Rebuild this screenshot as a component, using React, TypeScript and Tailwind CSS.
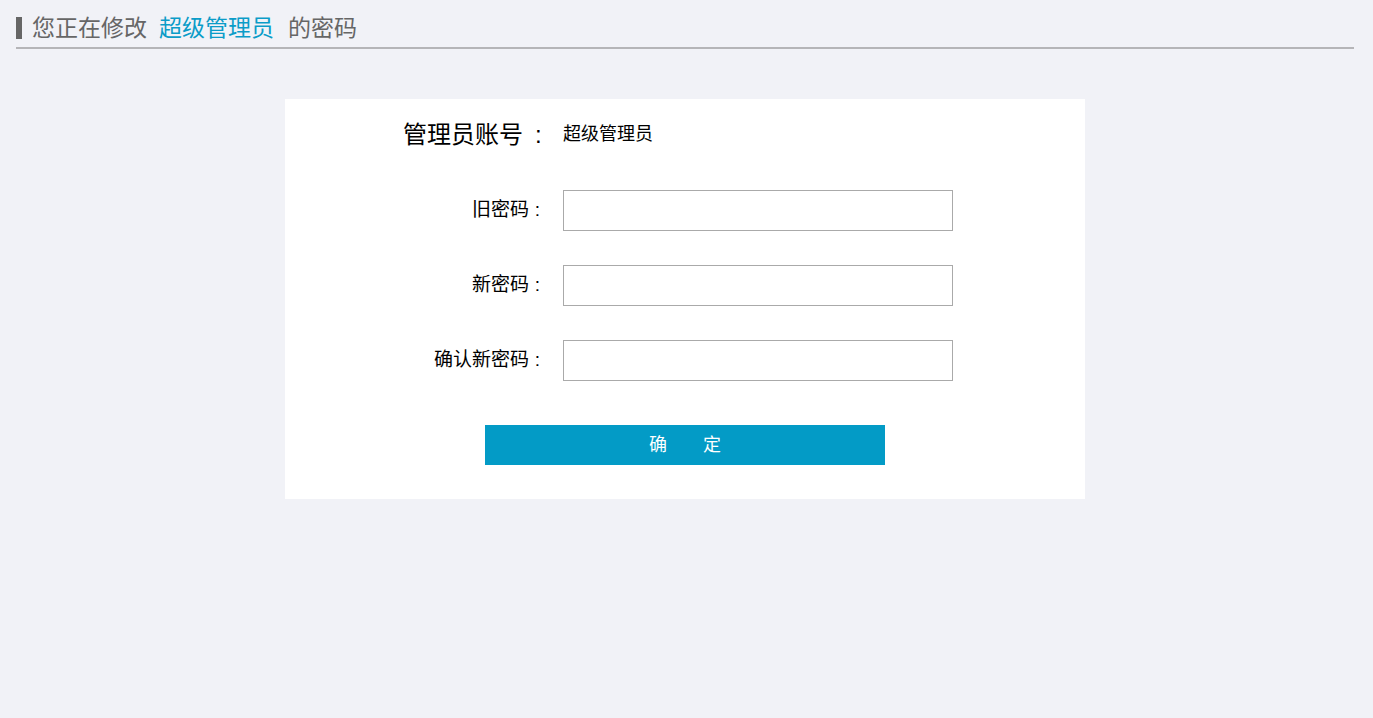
const fontStack = "font-['Liberation_Sans','Noto_Sans_CJK_SC',sans-serif]";

type Field = {
  id: string;
  label: string;
};

const fields: Field[] = [
  { id: "oldPassword", label: "旧密码" },
  { id: "newPassword", label: "新密码" },
  { id: "confirmPassword", label: "确认新密码" },
];

const App: React.FC = () => {
  return (
    <div className={`min-h-[718px] w-full bg-[#f1f2f7] ${fontStack}`}>
      <div className="ml-4 mr-[19px]">
        <div className="flex items-center border-b-2 border-[#b5b5b8] pb-[8px] pt-[17px]">
          <span className="h-[22px] w-[6px] bg-[#666666]" />
          <h1 className="ml-[10px] flex text-[23px] leading-[22px] text-[#666666]">
            <span>您正在修改</span>
            <span className="ml-[12px] mr-[14px] text-[#0b9cc8]">超级管理员</span>
            <span>的密码</span>
          </h1>
        </div>

        <div className="mx-auto mt-[50px] h-[400px] w-[800px] bg-white pt-[15px]">
          <div className="flex h-[41px] items-center">
            <div className="flex w-[261px] items-center justify-end text-[24px] text-black">
              <span>管理员账号</span>
              <span className="w-[23px] pl-[12px]">:</span>
            </div>
            <div className="ml-[17px] text-[18px] text-black">超级管理员</div>
          </div>

          <form className="mt-[35px] flex flex-col gap-[34px]">
            {fields.map((field) => (
              <div key={field.id} className="flex h-[41px] items-center">
                <label
                  htmlFor={field.id}
                  className="flex w-[261px] items-center justify-end text-[19px] text-black"
                >
                  <span>{field.label}</span>
                  <span className="w-[17px] text-center">:</span>
                </label>
                <input
                  type="password"
                  id={field.id}
                  name={field.id}
                  className="ml-[17px] h-[41px] w-[390px] border border-[#aaaaaa] px-2 outline-none"
                />
              </div>
            ))}
            <button
              type="button"
              className="mx-auto mt-[10px] h-[40px] w-[400px] bg-[#039bc6] text-[18px] text-white"
            >
              确　　定
            </button>
          </form>
        </div>
      </div>
    </div>
  );
};

export default App;
